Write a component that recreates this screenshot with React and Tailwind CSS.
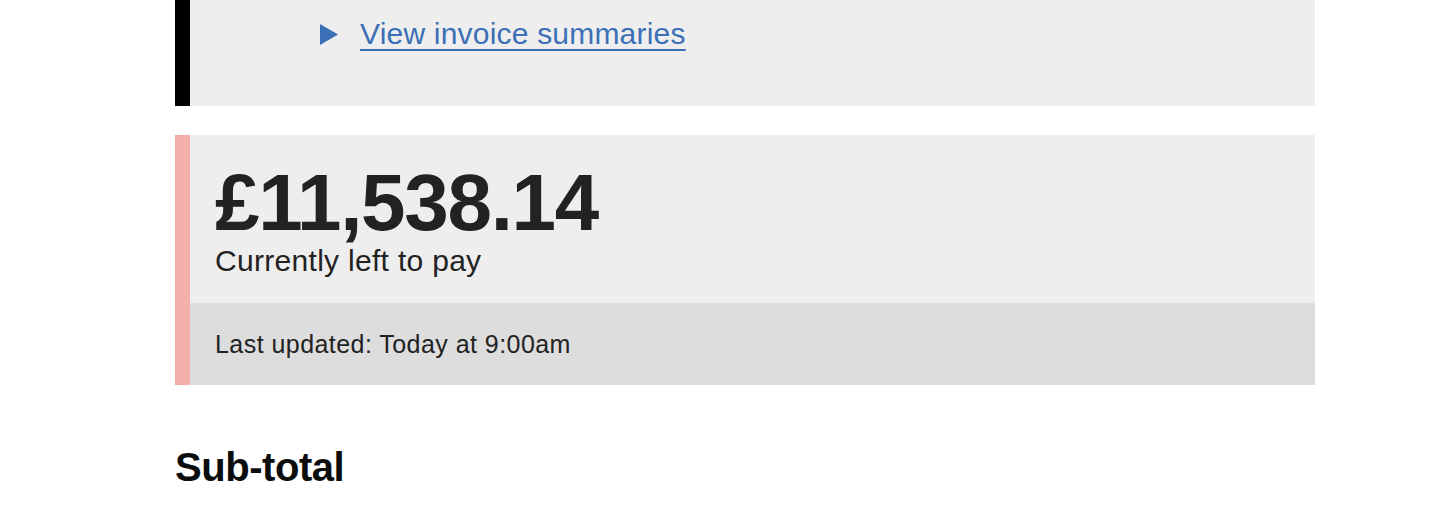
import React from 'react';

const font = { fontFamily: '"Liberation Sans", Arial, sans-serif' };

function Triangle() {
  return (
    <svg width="18" height="21" viewBox="0 0 18 21" className="shrink-0">
      <polygon points="0,0 18,10.5 0,21" fill="#3b6fb6" />
    </svg>
  );
}

export default function App() {
  return (
    <div className="min-h-screen bg-white" style={font}>
      <div className="ml-[175px] w-[1140px]">
        {/* invoice summaries panel (cut off above) */}
        <div className="flex border-l-[15px] border-black bg-[#eeeeee] pt-[16px] pb-[54px] pl-[130px]">
          <div className="flex items-center gap-[22px]">
            <Triangle />
            <a
              href="#"
              className="text-[30px] leading-[36px] tracking-[0.2px] text-[#3b6fb6] underline decoration-[2px] underline-offset-[5px]"
            >
              View invoice summaries
            </a>
          </div>
        </div>

        {/* balance panel */}
        <div className="mt-[29px] border-l-[15px] border-[#f4aeac]">
          <div className="bg-[#eeeeee] pl-[25px] pt-[28px] pb-[25px] text-[#222222]">
            <div className="text-[80px] leading-[80px] font-bold tracking-[-1.3px]">£11,538.14</div>
            <div className="text-[30px] leading-[35px] tracking-[0.3px]">Currently left to pay</div>
          </div>
          <div className="bg-[#dddddd] pl-[25px] py-[25px] text-[25px] leading-[32px] tracking-[0.45px] text-[#222222]">
            Last updated: Today at 9:00am
          </div>
        </div>

        <h2 className="mt-[58px] text-[40px] leading-[48px] font-bold tracking-[-0.45px] text-[#0b0c0c]">
          Sub-total
        </h2>
      </div>
    </div>
  );
}
